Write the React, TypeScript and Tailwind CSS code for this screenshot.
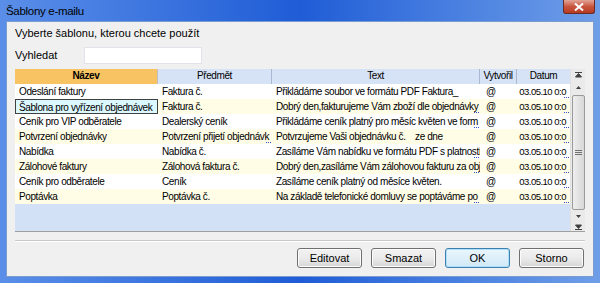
import React from "react";

interface Row {
  name: string;
  subject: string;
  text: string;
  cut: [boolean, boolean, boolean];
}

const rows: Row[] = [
  { name: "Odeslání faktury", subject: "Faktura č.", text: "Přikládáme soubor ve formátu PDF Faktura_", cut: [false, false, false] },
  { name: "Šablona pro vyřízení objednávek", subject: "Faktura č.", text: "Dobrý den,fakturujeme Vám zboží dle objednávky", cut: [false, false, true] },
  { name: "Ceník pro VIP odběratele", subject: "Dealerský ceník", text: "Přikládáme ceník platný pro měsíc květen ve form", cut: [false, false, true] },
  { name: "Potvrzení objednávky", subject: "Potvrzení přijetí objednávk", text: "Potvrzujeme Vaši objednávku č.    ze dne", cut: [false, true, false] },
  { name: "Nabídka", subject: "Nabídka č.", text: "Zasíláme Vám nabídku ve formátu PDF s platností", cut: [false, false, true] },
  { name: "Zálohové faktury", subject: "Zálohová faktura č.", text: "Dobrý den,zasíláme Vám zálohovou fakturu za obj", cut: [false, false, true] },
  { name: "Ceník pro odběratele", subject: "Ceník", text: "Zasíláme ceník platný od měsíce květen.", cut: [false, false, false] },
  { name: "Poptávka", subject: "Poptávka č.", text: "Na základě telefonické domluvy se poptáváme po", cut: [false, false, true] },
];

const Dots = () => (
  <span className="absolute right-[1px] bottom-[1px] w-[5px] h-[1px] border-b border-dotted border-[#3050d0]" />
);

const Cell = ({ children, cut, className }: { children: React.ReactNode; cut?: boolean; className?: string }) => (
  <div className={`relative h-[15px] pl-[4px] pr-[4px] leading-[15px] whitespace-pre overflow-hidden ${className ?? ""}`}>
    {children}
    {cut && <Dots />}
  </div>
);

const Btn = ({ label, focus }: { label: string; focus?: boolean }) => (
  <button
    className={`w-[65px] h-[20px] rounded-[3px] border text-[11px] text-black leading-none bg-gradient-to-b ${
      focus
        ? "border-[#3c7fb1] from-[#eaf6fd] to-[#d0e9f8] shadow-[inset_0_0_0_1px_#b0e0f8]"
        : "border-[#707070] from-[#f2f2f2] via-[#ebebeb] to-[#d6d6d6] shadow-[inset_0_0_0_1px_#fcfcfc]"
    }`}
  >
    {label}
  </button>
);

export default function App() {
  return (
    <div className="w-[600px] h-[283px] overflow-hidden flex flex-col bg-gradient-to-r from-[#5a8ee8] via-[#1f5cd6] to-[#6f9ee8] font-['Segoe_UI','Liberation_Sans',sans-serif] text-[11px] text-black">
      {/* title bar */}
      <div className="h-[21px] shrink-0 flex items-start justify-between pl-[6px] pr-[5px]">
        <span className="pt-[3px] text-[11.5px] tracking-[-0.3px] text-black">Šablony e-mailu</span>
        <div className="w-[32px] h-[14px] rounded-b-[3px] border border-t-0 border-[#6b2a22] bg-gradient-to-b from-[#e0a497] via-[#c9553f] to-[#b63a22] flex items-center justify-center">
          <svg width="10" height="8" viewBox="0 0 10 8">
            <path d="M1 0.5 L9 7.5 M9 0.5 L1 7.5" stroke="#fff" strokeWidth="2" />
          </svg>
        </div>
      </div>

      {/* client */}
      <div className="flex-1 mx-[6px] mb-[6px] bg-[#f0f0f0] border border-[#7a9bd0] flex flex-col pl-[8px] pr-[8px]">
        <div className="mt-[4px] h-[14px] leading-[14px]">Vyberte šablonu, kterou chcete použít</div>
        <div className="mt-[7px] flex items-center h-[17px]">
          <span className="w-[69px]">Vyhledat</span>
          <div className="w-[118px] h-[17px] bg-white border border-[#e2e3ea]" />
        </div>

        {/* grid */}
        <div className="mt-[5px] flex h-[163px] border-b border-[#a0a0a0] text-[10px] tracking-[-0.4px]">
          <div className="w-[555px] flex flex-col">
            <div className="grid grid-cols-[143px_114px_208px_37px_53px] h-[15px] leading-[14px] text-center">
              <div className="bg-[#f8c463] border-r border-[#c0c0c0] font-bold">Název</div>
              <div className="bg-[#d6e3f6] border-r border-[#a8b8d0]">Předmět</div>
              <div className="bg-[#d6e3f6] border-r border-[#a8b8d0]">Text</div>
              <div className="bg-[#d6e3f6] border-r border-[#a8b8d0]">Vytvořil</div>
              <div className="bg-[#d6e3f6]">Datum</div>
            </div>
            {rows.map((r, i) => (
              <div
                key={r.name}
                className={`grid grid-cols-[143px_114px_208px_37px_53px] ${i % 2 === 1 ? "bg-[#fffde6]" : "bg-white"}`}
              >
                {i === 1 ? (
                  <Cell className="bg-[#dcf8ff] border border-[#404040] !pl-[3px] leading-[13px]">{r.name}</Cell>
                ) : (
                  <Cell>{r.name}</Cell>
                )}
                <Cell cut={r.cut[1]}>{r.subject}</Cell>
                <Cell cut={r.cut[2]}>{r.text}</Cell>
                <Cell className="!pl-[6px]">@</Cell>
                <Cell cut className="text-right !pl-0 !pr-[4px] text-[9.5px] tracking-[-0.5px]">03.05.10 0:0</Cell>
              </div>
            ))}
            <div className="flex-1 bg-[#d3e1f6]" />
          </div>

          {/* scrollbar */}
          <div className="w-[15px] flex flex-col bg-[#eaeaea] border-l border-[#e0e0e0] items-center">
            <div className="h-[11px] flex items-center justify-center">
              <svg width="7" height="6" viewBox="0 0 7 6"><path d="M0 0.5H7M3.5 1.5L0.5 5H6.5Z" stroke="#404040" strokeWidth="1" fill="#404040" /></svg>
            </div>
            <div className="h-[15px] flex items-center justify-center">
              <svg width="5" height="3" viewBox="0 0 5 3"><path d="M2.5 0L5 3H0Z" fill="#404040" /></svg>
            </div>
            <div className="w-[13px] h-[115px] rounded-[2px] border border-[#9a9a9a] bg-gradient-to-r from-[#eeeeee] to-[#d8d8d8] flex items-center justify-center">
              <svg width="7" height="6" viewBox="0 0 7 6"><path d="M0 0.5H7M0 2.5H7M0 4.5H7" stroke="#707070" strokeWidth="1" /></svg>
            </div>
            <div className="h-[12px] flex items-center justify-center">
              <svg width="5" height="3" viewBox="0 0 5 3"><path d="M0 0H5L2.5 3Z" fill="#404040" /></svg>
            </div>
            <div className="h-[9px] flex items-center justify-center">
              <svg width="7" height="6" viewBox="0 0 7 6"><path d="M0.5 1H6.5L3.5 4.5Z M0 5.5H7" stroke="#404040" strokeWidth="1" fill="#404040" /></svg>
            </div>
          </div>
        </div>

        <div className="mt-[8px] h-[2px] border-t border-[#c8c8c8] border-b border-b-white" />

        <div className="mt-[6px] flex justify-end gap-[9px] pr-[1px]">
          <Btn label="Editovat" />
          <Btn label="Smazat" />
          <Btn label="OK" focus />
          <Btn label="Storno" />
        </div>
      </div>
    </div>
  );
}
